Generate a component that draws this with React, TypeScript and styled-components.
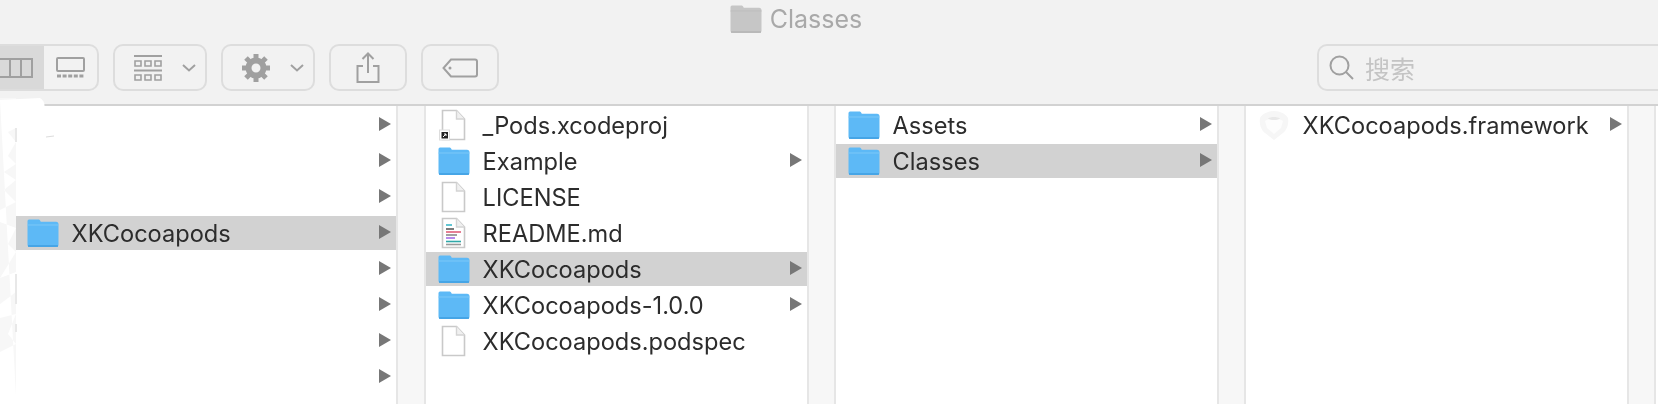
import { createGlobalStyle } from "styled-components";
import styled from "styled-components";

const GlobalStyle = createGlobalStyle`
  html, body {
    margin: 0;
    padding: 0;
    background: #fff;
  }
`;

const Window = styled.div`
  width: 1658px;
  height: 404px;
  overflow: hidden;
  display: flex;
  flex-direction: column;
  background: #fff;
  font-family: Inter, "Liberation Sans", "Noto Sans CJK SC", sans-serif;
  filter: blur(0.6px);
`;

const Header = styled.header`
  flex: 0 0 106px;
  box-sizing: border-box;
  background: #f2f2f2;
  border-bottom: 2px solid #d2d2d2;
  display: flex;
  flex-direction: column;
`;

const TitleBar = styled.div`
  flex: 0 0 38px;
  display: flex;
  align-items: center;
  justify-content: center;
  gap: 8px;
  padding-right: 66px;
  font-size: 25px;
  color: #a9a9a9;
`;

const Toolbar = styled.div`
  margin-top: 6px;
  height: 47px;
  display: flex;
  gap: 14px;
`;

const ToolButton = styled.div<{ $width: number; $menu?: boolean }>`
  box-sizing: border-box;
  width: ${(p) => p.$width}px;
  height: 47px;
  border: 2px solid #dddddd;
  border-radius: 10px;
  display: flex;
  align-items: center;
  justify-content: ${(p) => (p.$menu ? "flex-start" : "center")};
  padding-left: ${(p) => (p.$menu ? "19px" : "0")};
  gap: 20px;
`;

const ViewSwitch = styled.div`
  box-sizing: border-box;
  width: 99px;
  height: 47px;
  border: 2px solid #dddddd;
  border-left: 0;
  border-radius: 0 10px 10px 0;
  display: flex;
  overflow: hidden;
`;

const ViewTab = styled.div<{ $active?: boolean }>`
  width: ${(p) => (p.$active ? 44 : 53)}px;
  display: flex;
  align-items: center;
  justify-content: ${(p) => (p.$active ? "flex-start" : "center")};
  background: ${(p) => (p.$active ? "#d9d9d9" : "transparent")};
`;

const SearchBox = styled.div`
  box-sizing: border-box;
  margin-left: auto;
  width: 341px;
  height: 47px;
  border: 2px solid #dddddd;
  border-right: 0;
  border-radius: 10px 0 0 10px;
  display: flex;
  align-items: center;
  gap: 11px;
  padding-left: 10px;
  font-size: 25px;
  color: #c4c4c4;
  font-family: "Noto Sans CJK SC", sans-serif;
`;

const Columns = styled.main`
  flex: 1;
  display: flex;
  min-height: 0;
`;

const Pane = styled.section<{ $width: number }>`
  position: relative;
  flex: 0 0 ${(p) => p.$width}px;
  display: flex;
`;

const List = styled.div<{ $inset: number }>`
  flex: 1;
  padding-left: ${(p) => p.$inset}px;
  min-width: 0;
`;

const Gutter = styled.div<{ $width: number }>`
  flex: 0 0 ${(p) => p.$width}px;
  box-sizing: border-box;
  background: #f7f7f7;
  border-left: 2px solid #e6e6e6;
  border-right: 2px solid #e6e6e6;
`;

const Row = styled.div`
  height: 36px;
  box-sizing: border-box;
  padding-top: 2px;
`;

const RowInner = styled.div<{ $selected?: boolean }>`
  height: 34px;
  display: flex;
  align-items: center;
  padding: 0 5px 0 12px;
  background: ${(p) => (p.$selected ? "#d2d2d2" : "transparent")};
`;

const IconSlot = styled.span`
  flex: 0 0 32px;
  height: 32px;
  margin-right: 12.6px;
  display: flex;
`;

const Name = styled.span`
  flex: 1;
  padding-top: 1px;
  font-size: 23.6px;
  line-height: 34px;
  color: #2c2c2c;
  white-space: nowrap;
`;

const Arrow = styled.span`
  margin-left: auto;
  margin-bottom: 2px;
  width: 0;
  height: 0;
  border-left: 12px solid #777;
  border-top: 7px solid transparent;
  border-bottom: 7px solid transparent;
`;

const Scribble = styled.svg`
  position: absolute;
  left: 0;
  top: -8px;
  pointer-events: none;
`;

const Gray = styled.svg`
  display: block;
  flex: none;
  fill: none;
  stroke: #a0a0a0;
  stroke-width: 2;
`;

const Chevron = () => (
  <Gray width="14" height="8" viewBox="0 0 14 8">
    <path d="M1 1l6 5.5L13 1" />
  </Gray>
);

const FolderIcon = ({ muted }: { muted?: boolean }) => (
  <svg width="32" height="32" viewBox="0 0 32 32">
    <path
      d="M2 2.5h9c1.5 0 2 .6 2.8 2.2H29a2.5 2.5 0 0 1 2.5 2.5v20.3A2.5 2.5 0 0 1 29 30H3a2.5 2.5 0 0 1-2.5-2.5V4A1.6 1.6 0 0 1 2 2.5z"
      fill={muted ? "#c6c6c6" : "#5db9f6"}
    />
    <path d="M.5 8h31" stroke={muted ? "#bdbdbd" : "#7cc8f8"} />
    <path d="M1 29h30" stroke={muted ? "#b5b5b5" : "#3f9fe0"} strokeWidth="1.5" />
  </svg>
);

const DocOutline = () => (
  <>
    <path d="M4.5 1.5h14l8 8.5v20.5h-22z" fill="#fff" stroke="#c9c9c9" strokeWidth="1.6" />
    <path d="M18.5 1.5V10h8" fill="#f0f0f0" stroke="#d4d4d4" strokeWidth="1.4" />
  </>
);

const DocIcon = () => (
  <svg width="32" height="32" viewBox="0 0 32 32">
    <DocOutline />
  </svg>
);

const ProjectIcon = () => (
  <svg width="32" height="32" viewBox="0 0 32 32">
    <DocOutline />
    <rect x="1.5" y="21" width="10" height="10" fill="#fff" stroke="#ddd" />
    <rect x="3.5" y="23" width="6.5" height="6.5" fill="#222" />
    <path d="M5 28l3-3M6 25h2v2" stroke="#fff" fill="none" />
  </svg>
);

const ReadmeIcon = () => (
  <svg width="32" height="32" viewBox="0 0 32 32" strokeWidth="1.6">
    <DocOutline />
    <path d="M8 8h6" stroke="#3db8c8" />
    <path d="M8 12h8" stroke="#5a5a5a" />
    <path d="M8 15h15" stroke="#e0607a" />
    <path d="M8 18h11" stroke="#8a8a8a" />
    <path d="M8 21h9" stroke="#a46de8" />
    <path d="M8 24.5h15" stroke="#2fa8a8" />
    <path d="M8 27.5h15" stroke="#9a9a9a" />
  </svg>
);

const FrameworkIcon = () => (
  <svg width="32" height="32" viewBox="0 0 32 32">
    <path d="M16 2c6 0 12 3 14 7 1 6-1 12-5 15l-9 7-9-7C3 21 1 15 2 9c2-4 8-7 14-7z" fill="#f6f6f6" />
    <path d="M7 12c4-3 14-3 18 0l-2 7-7 6-7-6z" fill="#fdfdfd" />
    <path d="M10 9.500c3-2 9-2 12 0-3 2-9 2-12 0z" fill="#e8e8e8" />
  </svg>
);

const icons = {
  folder: <FolderIcon />,
  doc: <DocIcon />,
  project: <ProjectIcon />,
  readme: <ReadmeIcon />,
  framework: <FrameworkIcon />,
};

type Item = {
  name?: string;
  icon?: keyof typeof icons;
  arrow?: boolean;
  selected?: boolean;
};

const FileRow = ({ name, icon, arrow, selected }: Item) => (
  <Row>
    <RowInner $selected={selected}>
      {icon && <IconSlot>{icons[icon]}</IconSlot>}
      {name && <Name>{name}</Name>}
      {arrow && <Arrow />}
    </RowInner>
  </Row>
);

const rootItems: Item[] = [
  { arrow: true },
  { arrow: true },
  { arrow: true },
  { name: "XKCocoapods", icon: "folder", arrow: true, selected: true },
  { arrow: true },
  { arrow: true },
  { arrow: true },
  { arrow: true },
];

const podItems: Item[] = [
  { name: "_Pods.xcodeproj", icon: "project" },
  { name: "Example", icon: "folder", arrow: true },
  { name: "LICENSE", icon: "doc" },
  { name: "README.md", icon: "readme" },
  { name: "XKCocoapods", icon: "folder", arrow: true, selected: true },
  { name: "XKCocoapods-1.0.0", icon: "folder", arrow: true },
  { name: "XKCocoapods.podspec", icon: "doc" },
];

const sourceItems: Item[] = [
  { name: "Assets", icon: "folder", arrow: true },
  { name: "Classes", icon: "folder", arrow: true, selected: true },
];

const classItems: Item[] = [{ name: "XKCocoapods.framework", icon: "framework", arrow: true }];

export default function App() {
  return (
    <>
      <GlobalStyle />
      <Window>
        <Header>
          <TitleBar>
            <FolderIcon muted />
            Classes
          </TitleBar>
          <Toolbar>
            <ViewSwitch>
              <ViewTab $active>
                <Gray width="33" height="20" viewBox="0 0 33 20">
                  <path d="M-2 1h34v18H-2zM10 1v18M21 1v18" />
                </Gray>
              </ViewTab>
              <ViewTab>
                <Gray width="29" height="21" viewBox="0 0 29 21">
                  <rect x="1" y="1" width="27" height="13" rx="1" />
                  <path d="M1 19h27" strokeWidth="3" strokeDasharray="4 1.6" />
                </Gray>
              </ViewTab>
            </ViewSwitch>
            <ToolButton $width={94} $menu>
              <Gray width="28" height="26" viewBox="0 0 28 26">
                <path d="M0 1h28M0 15.5h28" />
                <path d="M1 6h6v5H1zM11 6h6v5h-6zM21 6h6v5h-6zM1 20h6v5H1zM11 20h6v5h-6zM21 20h6v5h-6z" strokeWidth="1.6" />
              </Gray>
              <Chevron />
            </ToolButton>
            <ToolButton $width={94} $menu>
              <Gray width="28" height="28" viewBox="0 0 28 28">
                <circle cx="14" cy="14" r="7.5" strokeWidth="6" />
                <path
                  d="M14 0v6M14 22v6M0 14h6M22 14h6M4 4l4.300 4.300M19.700 19.700L24 24M24 4l-4.300 4.300M8.300 19.700L4 24"
                  strokeWidth="5"
                />
              </Gray>
              <Chevron />
            </ToolButton>
            <ToolButton $width={78}>
              <Gray width="24" height="31" viewBox="0 0 24 31">
                <path d="M7 14H1.500v16h21V14H17M12 21V2M6.500 7L12 1.500 17.500 7" />
              </Gray>
            </ToolButton>
            <ToolButton $width={78}>
              <Gray width="36" height="20" viewBox="0 0 36 20">
                <path d="M9 1.500h24a2 2 0 0 1 2 2v13a2 2 0 0 1-2 2H9L1.500 10z" />
                <circle cx="8" cy="10" r="1.500" fill="#a0a0a0" stroke="none" />
              </Gray>
            </ToolButton>
            <SearchBox>
              <Gray width="25" height="25" viewBox="0 0 25 25">
                <circle cx="10.500" cy="10.500" r="9" />
                <path d="M17 17l7 7" />
              </Gray>
              搜索
            </SearchBox>
          </Toolbar>
        </Header>
        <Columns>
          <Pane $width={426}>
            <List $inset={15}>
              {rootItems.map((item, i) => (
                <FileRow key={i} {...item} />
              ))}
            </List>
            <Gutter $width={30} />
            <Scribble width="60" height="306" viewBox="0 0 60 306">
              <path d="M0 0h16v306H0z" fill="#f7f7f7" />
              <path
                d="M0 2L40 0q6 4 4 10L22 14l-6 16-8 4 8 10-8 14 8 8-12 8 12 8-12 10 12 12-16 8v12l16 6-8 16 8 8-16 26 16-6v20L0 206v14l16-4-8 20 8 10-16 8v52h16v-8"
                fill="#fff"
              />
              <path d="M16 30v14M16 176v30M16 226v8" stroke="#e8e8e8" strokeWidth="2" fill="none" />
              <path d="M46 39l8-1" stroke="#dcdcdc" fill="none" />
            </Scribble>
          </Pane>
          <Pane $width={410}>
            <List $inset={0}>
              {podItems.map((item) => (
                <FileRow key={item.name} {...item} />
              ))}
            </List>
            <Gutter $width={29} />
          </Pane>
          <Pane $width={410}>
            <List $inset={0}>
              {sourceItems.map((item) => (
                <FileRow key={item.name} {...item} />
              ))}
            </List>
            <Gutter $width={29} />
          </Pane>
          <Pane $width={410}>
            <List $inset={0}>
              {classItems.map((item) => (
                <FileRow key={item.name} {...item} />
              ))}
            </List>
            <Gutter $width={29} />
          </Pane>
        </Columns>
      </Window>
    </>
  );
}
